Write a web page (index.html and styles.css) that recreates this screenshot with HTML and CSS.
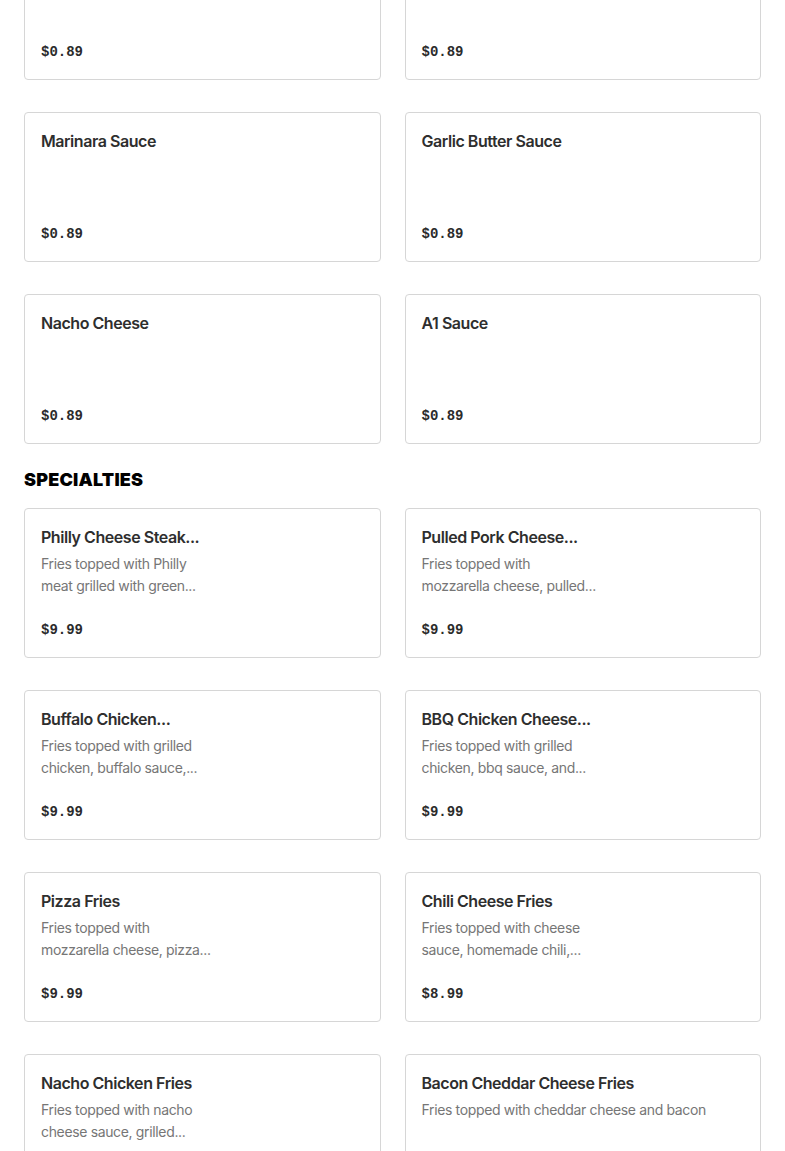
FILE: index.html
```html
<!DOCTYPE html>
<html lang="en">
<head>
<meta charset="utf-8">
<title>Menu</title>
<link rel="stylesheet" href="styles.css">
</head>
<body>
<main class="menu">
  <section class="section section--scrolled">
    <div class="grid">
      <div class="card"><div class="price">$0.89</div></div>
      <div class="card"><div class="price">$0.89</div></div>
      <div class="card"><h3 class="title">Marinara Sauce</h3><div class="price">$0.89</div></div>
      <div class="card"><h3 class="title">Garlic Butter Sauce</h3><div class="price">$0.89</div></div>
      <div class="card"><h3 class="title">Nacho Cheese</h3><div class="price">$0.89</div></div>
      <div class="card"><h3 class="title">A1 Sauce</h3><div class="price">$0.89</div></div>
    </div>
  </section>
  <section class="section">
    <h2 class="heading">SPECIALTIES</h2>
    <div class="grid">
      <div class="card">
        <h3 class="title">Philly Cheese Steak...</h3>
        <p class="desc"><span>Fries topped with Philly</span><span>meat grilled with green...</span></p>
        <div class="price">$9.99</div>
      </div>
      <div class="card">
        <h3 class="title">Pulled Pork Cheese...</h3>
        <p class="desc"><span>Fries topped with</span><span>mozzarella cheese, pulled...</span></p>
        <div class="price">$9.99</div>
      </div>
      <div class="card">
        <h3 class="title">Buffalo Chicken...</h3>
        <p class="desc"><span>Fries topped with grilled</span><span>chicken, buffalo sauce,...</span></p>
        <div class="price">$9.99</div>
      </div>
      <div class="card">
        <h3 class="title">BBQ Chicken Cheese...</h3>
        <p class="desc"><span>Fries topped with grilled</span><span>chicken, bbq sauce, and...</span></p>
        <div class="price">$9.99</div>
      </div>
      <div class="card">
        <h3 class="title">Pizza Fries</h3>
        <p class="desc"><span>Fries topped with</span><span>mozzarella cheese, pizza...</span></p>
        <div class="price">$9.99</div>
      </div>
      <div class="card">
        <h3 class="title">Chili Cheese Fries</h3>
        <p class="desc"><span>Fries topped with cheese</span><span>sauce, homemade chili,...</span></p>
        <div class="price">$8.99</div>
      </div>
      <div class="card">
        <h3 class="title">Nacho Chicken Fries</h3>
        <p class="desc"><span>Fries topped with nacho</span><span>cheese sauce, grilled...</span></p>
        <div class="price">$9.99</div>
      </div>
      <div class="card">
        <h3 class="title">Bacon Cheddar Cheese Fries</h3>
        <p class="desc"><span>Fries topped with cheddar cheese and bacon</span></p>
        <div class="price">$9.99</div>
      </div>
    </div>
  </section>
</main>
</body>
</html>
```
FILE: styles.css
```css
* { box-sizing: border-box; }
html, body { margin: 0; padding: 0; background: #fff; }
body {
  font-family: "Inter", "Liberation Sans", Arial, sans-serif;
  color: #2b2b2b;
}
.menu {
  padding: 0 24px 40px;
}
.section--scrolled {
  margin-top: -70px;
}
.heading {
  margin: 24px 0 16px;
  font-family: "Inter", "Liberation Sans", sans-serif;
  font-weight: 900;
  font-size: 18px;
  line-height: 24px;
  color: #000;
  letter-spacing: 0.2px;
}
.grid {
  display: grid;
  grid-template-columns: 1fr 1fr;
  column-gap: 24px;
  row-gap: 32px;
}
.card {
  display: flex;
  flex-direction: column;
  min-height: 150px;
  padding: 16px 16px 15px;
  border: 1px solid #d6d6d6;
  border-radius: 4px;
  background: #fff;
}
.title {
  margin: 0;
  font-size: 16px;
  line-height: 24px;
  font-weight: 600;
  color: #2e2e2e;
  letter-spacing: -0.45px;
}
.desc {
  margin: 4px 0 0;
  font-size: 14px;
  line-height: 22px;
  color: #767676;
  letter-spacing: -0.35px;
}
.desc span { display: block; }
.price {
  margin-top: auto;
  font-family: "Liberation Mono", "Courier New", monospace;
  font-weight: 700;
  font-size: 14px;
  line-height: 24px;
  color: #2b2b2b;
}
```
